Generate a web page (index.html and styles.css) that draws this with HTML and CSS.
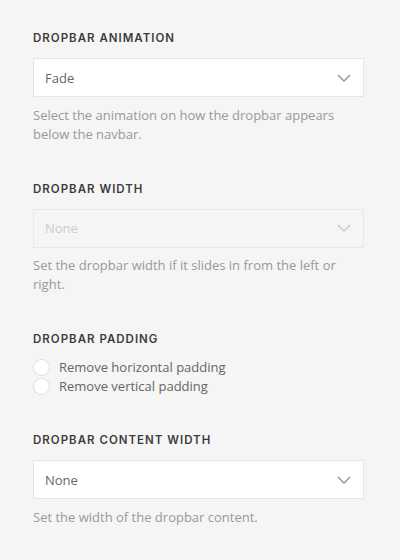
FILE: index.html
```html
<!DOCTYPE html>
<html lang="en">
<head>
    <meta charset="UTF-8">
    <meta name="viewport" content="width=device-width, initial-scale=1.0">
    <title>Dropbar Settings</title>
    <link rel="stylesheet" href="styles.css">
</head>
<body>
    <div class="panel">
        <div class="field">
            <div class="label">Dropbar Animation</div>
            <div class="select">
                <span>Fade</span>
                <svg class="chevron" width="14" height="8" viewBox="0 0 14 8"><polyline points="1,1 7,7 13,1" fill="none" stroke="currentColor" stroke-width="1.5"/></svg>
            </div>
            <p class="help">Select the animation on how the dropbar appears below the navbar.</p>
        </div>

        <div class="field">
            <div class="label">Dropbar Width</div>
            <div class="select disabled">
                <span>None</span>
                <svg class="chevron" width="14" height="8" viewBox="0 0 14 8"><polyline points="1,1 7,7 13,1" fill="none" stroke="currentColor" stroke-width="1.5"/></svg>
            </div>
            <p class="help">Set the dropbar width if it slides in from the left or right.</p>
        </div>

        <div class="field">
            <div class="label">Dropbar Padding</div>
            <div class="checks">
                <label class="check"><span class="radio"></span>Remove horizontal padding</label>
                <label class="check"><span class="radio"></span>Remove vertical padding</label>
            </div>
        </div>

        <div class="field">
            <div class="label">Dropbar Content Width</div>
            <div class="select">
                <span>None</span>
                <svg class="chevron" width="14" height="8" viewBox="0 0 14 8"><polyline points="1,1 7,7 13,1" fill="none" stroke="currentColor" stroke-width="1.5"/></svg>
            </div>
            <p class="help">Set the width of the dropbar content.</p>
        </div>
    </div>
</body>
</html>
```

FILE: styles.css
```css
* {
    box-sizing: border-box;
    margin: 0;
    padding: 0;
}

body {
    font-family: 'Open Sans', sans-serif;
    background-color: #f5f5f5;
    color: #666;
}

.panel {
    padding: 30px 36px 0 33px;
    display: flex;
    flex-direction: column;
    gap: 37px;
}

.label {
    font-family: Inter, 'Open Sans', sans-serif;
    font-size: 11.5px;
    font-weight: 600;
    line-height: 16px;
    letter-spacing: 1px;
    text-transform: uppercase;
    color: #3d3d3d;
    margin-bottom: 12px;
}

.select {
    height: 39px;
    background: #fff;
    border: 1px solid #e5e5e5;
    display: flex;
    align-items: center;
    justify-content: space-between;
    padding: 0 12px 0 11px;
    font-size: 13px;
    color: #666;
}

.select.disabled {
    background: transparent;
    color: #ccc;
    border-color: #e8e8e8;
}

.chevron {
    color: #999;
}

.select.disabled .chevron {
    color: #ccc;
}

.help {
    margin-top: 8.5px;
    font-size: 13px;
    line-height: 19px;
    color: #999;
}

.checks {
    display: flex;
    flex-direction: column;
    margin: -1px 0;
}

.check {
    display: flex;
    align-items: center;
    gap: 9px;
    font-size: 13px;
    line-height: 19px;
    color: #666;
}

.radio {
    width: 17px;
    height: 17px;
    border-radius: 50%;
    border: 1px solid #ddd;
    background: #fff;
}
```
